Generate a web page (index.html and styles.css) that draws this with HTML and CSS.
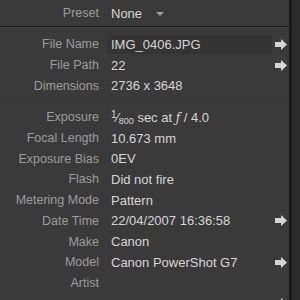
FILE: index.html
```html
<!DOCTYPE html>
<html>
<head>
<meta charset="utf-8">
<link rel="stylesheet" href="styles.css">
</head>
<body>
<div class="app">
  <div class="panel">
    <div class="preset">
      <span class="label">Preset</span>
      <span class="value">None <span class="tri"></span></span>
    </div>
    <div class="section first">
      <div class="row field"><span class="label">File Name</span><span class="value">IMG_0406.JPG</span><span class="go"><svg viewBox="0 0 12 11" width="12" height="11"><path d="M0 3 H6 V0 L12 5.5 L6 11 V8 H0 Z"/></svg></span></div>
      <div class="row"><span class="label">File Path</span><span class="value">22</span><span class="go"><svg viewBox="0 0 12 11" width="12" height="11"><path d="M0 3 H6 V0 L12 5.5 L6 11 V8 H0 Z"/></svg></span></div>
      <div class="row"><span class="label">Dimensions</span><span class="value">2736 x 3648</span><span class="go"></span></div>
    </div>
    <div class="section second">
      <div class="row"><span class="label">Exposure</span><span class="value"><sup class="num">1</sup>&frasl;<sub class="den">800</sub> sec at <i class="f">ƒ</i> / 4.0</span><span class="go"></span></div>
      <div class="row"><span class="label">Focal Length</span><span class="value">10.673 mm</span><span class="go"></span></div>
      <div class="row"><span class="label">Exposure Bias</span><span class="value">0EV</span><span class="go"></span></div>
      <div class="row"><span class="label">Flash</span><span class="value">Did not fire</span><span class="go"></span></div>
      <div class="row"><span class="label">Metering Mode</span><span class="value">Pattern</span><span class="go"></span></div>
      <div class="row"><span class="label">Date Time</span><span class="value">22/04/2007 16:36:58</span><span class="go"><svg viewBox="0 0 12 11" width="12" height="11"><path d="M0 3 H6 V0 L12 5.5 L6 11 V8 H0 Z"/></svg></span></div>
      <div class="row"><span class="label">Make</span><span class="value">Canon</span><span class="go"></span></div>
      <div class="row"><span class="label">Model</span><span class="value">Canon PowerShot G7</span><span class="go"><svg viewBox="0 0 12 11" width="12" height="11"><path d="M0 3 H6 V0 L12 5.5 L6 11 V8 H0 Z"/></svg></span></div>
      <div class="row"><span class="label">Artist</span><span class="value"></span><span class="go"></span></div>
      <div class="row"><span class="label"></span><span class="value"></span><span class="go"><svg viewBox="0 0 12 11" width="12" height="11"><path d="M0 3 H6 V0 L12 5.5 L6 11 V8 H0 Z"/></svg></span></div>
    </div>
  </div>
  <div class="edge"></div>
</div>
</body>
</html>
```

FILE: styles.css
```css
html, body {
  margin: 0;
  padding: 0;
  background: #3a3a3a;
}
body {
  width: 300px;
  height: 300px;
  overflow: hidden;
  font-family: "Liberation Sans", Arial, sans-serif;
}
.app {
  display: flex;
  height: 300px;
}
.panel {
  width: 289px;
  flex: none;
  background: #3a3a3a;
}
.edge {
  flex: 1;
  border-left: 3px solid #1b1b1b;
  background: #2b2b2b;
}
.preset {
  height: 26px;
  display: grid;
  grid-template-columns: 99px 173px 17px;
  align-items: center;
  border-bottom: 1px solid #171717;
  box-sizing: content-box;
}
.preset .value {
  display: flex;
  align-items: center;
}
.tri {
  display: inline-block;
  width: 0;
  height: 0;
  margin-left: 14px;
  margin-top: 1px;
  border-left: 4px solid transparent;
  border-right: 4px solid transparent;
  border-top: 4px solid #a0a0a0;
}
.section.first {
  padding: 7px 0 6px;
  box-shadow: inset 0 1px 0 #424242;
}
.section.second {
  border-top: 1px solid #303030;
  box-shadow: inset 0 1px 0 #404040;
  padding-top: 4px;
}
.row {
  height: 20.7px;
  display: grid;
  grid-template-columns: 99px 173px 17px;
  align-items: center;
}
.label {
  text-align: right;
  color: #9c9c9c;
  font-size: 12.5px;
  white-space: nowrap;
}
.value {
  margin-left: 8px;
  padding-left: 4px;
  color: #d6d6d6;
  font-size: 13px;
  white-space: nowrap;
  height: 19px;
  line-height: 19px;
}
.field .value {
  background: #343434;
}
.go {
  display: flex;
  align-items: center;
  padding-left: 3px;
  height: 20px;
}
.go svg {
  display: block;
  fill: #d6d6d6;
}
.num {
  font-size: 10px;
  vertical-align: 4px;
  line-height: 0;
}
.den {
  font-size: 9px;
  vertical-align: -2px;
  line-height: 0;
}
.f {
  font-family: "DejaVu Serif", serif;
  font-style: italic;
  font-size: 12px;
}
```
